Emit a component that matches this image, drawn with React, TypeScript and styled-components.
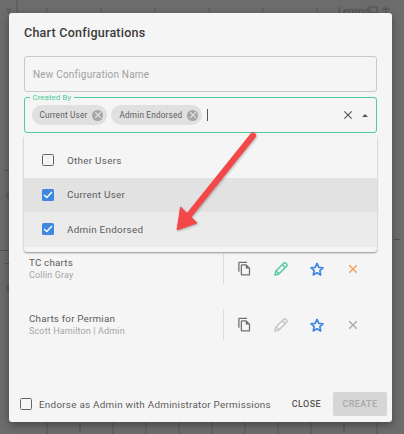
import React from "react";
import styled, { createGlobalStyle } from "styled-components";

const COPY_PATH =
  "M16 1H4c-1.1 0-2 .9-2 2v14h2V3h12V1zm-1 4H8c-1.1 0-1.99.9-1.99 2L6 21c0 1.1.89 2 1.99 2H19c1.1 0 2-.9 2-2V11l-6-6zM8 21V7h6v5h5v9H8z";
const CLOSE_PATH =
  "M19 6.41L17.59 5 12 10.59 6.41 5 5 6.41 10.59 12 5 17.59 6.41 19 12 13.41 17.59 19 19 17.59 13.41 12z";

const Icon = ({ d, size, color }: { d: string; size: number; color: string }) => (
  <svg width={size} height={size} viewBox="0 0 24 24" fill={color}>
    <path d={d} />
  </svg>
);

const PencilIcon = ({ color }: { color: string }) => (
  <svg width={18} height={18} viewBox="0 0 24 24" fill="none" stroke={color} strokeWidth={1.9} strokeLinejoin="round">
    <path d="M4 20l1.2-5.2L15.6 4.4a2 2 0 0 1 2.8 0l1.2 1.2a2 2 0 0 1 0 2.8L9.2 18.8z" />
    <path d="M13.8 6.2l4 4M5.6 14.6l3.8 3.8" />
  </svg>
);

const StarIcon = ({ color }: { color: string }) => (
  <svg width={16} height={16} viewBox="0 0 24 24" fill="none" stroke={color} strokeWidth={2.5} strokeLinejoin="round">
    <path d="M12 3.6l2.7 6 6.3.7-4.7 4.3 1.3 6.3-5.6-3.2-5.6 3.2 1.3-6.3L3 10.300l6.300-.7z" />
  </svg>
);

const CrossIcon = ({ color }: { color: string }) => (
  <svg width={14} height={14} viewBox="0 0 24 24" fill="none" stroke={color} strokeWidth={2.4}>
    <path d="M5.500 5.500l13 13M18.500 5.500l-13 13" />
  </svg>
);

const App = () => {
  return (
    <Backdrop>
      <GlobalStyle />
      <ChartBehind viewBox="0 0 404 434">
        <path d="M17 0V13M47 422V434M80 422V434M113 422V434M146 422V434M179 422V434M212 422V434M245 422V434M278 422V434M311 422V434M344 422V434M377 422V434" stroke="#565656" />
        <path d="M47 8V13M101 8V13M155 8V13M209 8V13M263 8V13M317 8V13" stroke="#5a5a5a" />
        <path d="M0 250.5H9M5 170.5H9M5 263.5H9M394 239.5H400" stroke="#505050" />
        <path d="M6 9.500H11M7 11.500H10M8 13H9M7 193H9V198H7zM7 286H9V291H7z" stroke="#525252" fill="none" />
        <path d="M370 7H377V13H370zM386 6V13M382 9H390" stroke="#4e4e4e" fill="none" />
      </ChartBehind>
      <BackdropLegend>Legend</BackdropLegend>
      <Modal>
        <Title>Chart Configurations</Title>
        <NameInput>New Configuration Name</NameInput>
        <SelectBox>
          <SelectLabel>Created By</SelectLabel>
          <Chip>
            Current User
            <ChipClear />
          </Chip>
          <Chip>
            Admin Endorsed
            <ChipClear />
          </Chip>
          <Caret />
          <SelectActions>
            <Icon d={CLOSE_PATH} size={14} color="#555" />
            <UpArrow />
          </SelectActions>
        </SelectBox>
        <ConfigList>
          <ConfigRow>
            <ConfigText>
              <ConfigName>TC charts</ConfigName>
              <ConfigOwner>Collin Gray</ConfigOwner>
            </ConfigText>
            <ConfigActions>
              <IconSlot><Icon d={COPY_PATH} size={15} color="#6e6e6e" /></IconSlot>
              <IconSlot><PencilIcon color="#4fcb9d" /></IconSlot>
              <IconSlot><StarIcon color="#3f87e0" /></IconSlot>
              <IconSlot><CrossIcon color="#f2a25c" /></IconSlot>
            </ConfigActions>
          </ConfigRow>
          <ConfigRow>
            <ConfigText>
              <ConfigName>Charts for Permian</ConfigName>
              <ConfigOwner>Scott Hamilton | Admin</ConfigOwner>
            </ConfigText>
            <ConfigActions>
              <IconSlot><Icon d={COPY_PATH} size={15} color="#6e6e6e" /></IconSlot>
              <IconSlot><PencilIcon color="#c4c4c4" /></IconSlot>
              <IconSlot><StarIcon color="#3f87e0" /></IconSlot>
              <IconSlot><CrossIcon color="#aaaaaa" /></IconSlot>
            </ConfigActions>
          </ConfigRow>
        </ConfigList>
        <Dropdown>
          <Option>
            <Box />
            Other Users
          </Option>
          <Option $tone="#e2e2e2">
            <Box $checked>
              <Tick />
            </Box>
            Current User
          </Option>
          <Option $tone="#ebebeb">
            <Box $checked>
              <Tick />
            </Box>
            Admin Endorsed
          </Option>
        </Dropdown>
        <Footer>
          <Endorse>
            <Box />
            Endorse as Admin with Administrator Permissions
          </Endorse>
          <CloseButton>CLOSE</CloseButton>
          <CreateButton>CREATE</CreateButton>
        </Footer>
        <Arrow viewBox="0 0 90 105">
          <path d="M79 3.500 L12 87" stroke="#f44848" strokeWidth="6" strokeLinecap="round" />
          <path d="M3 98 L6.500 75 L23 91 Z" fill="#f44848" stroke="#f44848" strokeLinejoin="round" />
        </Arrow>
      </Modal>
    </Backdrop>
  );
};

const Tick = () => (
  <svg width="10" height="8" viewBox="0 0 10 8">
    <path d="M1 4 L3.8 6.6 L9 1" fill="none" stroke="#fff" strokeWidth="1.4" />
  </svg>
);

const ChipClear = () => (
  <ClearDot>
    <svg width="8" height="8" viewBox="0 0 8 8">
      <path d="M1.2 1.2 L6.8 6.8 M6.8 1.2 L1.2 6.8" stroke="#e4e4e4" strokeWidth="1.2" />
    </svg>
  </ClearDot>
);

const GlobalStyle = createGlobalStyle`
  html, body {
    margin: 0;
    height: 100%;
    overflow: hidden;
    background: #6c6c6c;
    font-family: Roboto, "Liberation Sans", sans-serif;
  }
`;

const Backdrop = styled.div`
  position: relative;
  width: 404px;
  height: 434px;
  box-sizing: border-box;
  padding: 13px 12px 12px 9px;
  background-color: #6c6c6c;
  overflow: hidden;
`;

const ChartBehind = styled.svg`
  position: absolute;
  inset: 0;
  width: 404px;
  height: 434px;
`;

const BackdropLegend = styled.div`
  position: absolute;
  top: 5px;
  left: 338px;
  font-size: 9.5px;
  color: #4c4c4c;
`;

const Modal = styled.div`
  position: relative;
  height: 409px;
  box-sizing: border-box;
  padding: 10px 15px 6px 15px;
  display: flex;
  flex-direction: column;
  background: #f5f5f5;
  border-radius: 3px;
  box-shadow: 0 3px 8px rgba(0, 0, 0, 0.35);
`;

const Title = styled.h2`
  margin: 0 0 13px;
  font-size: 12.5px;
  line-height: 20px;
  font-weight: 500;
  letter-spacing: 0.25px;
  color: #3a3a3a;
`;

const NameInput = styled.div`
  height: 36px;
  box-sizing: border-box;
  margin-bottom: 5px;
  padding: 0 8px;
  display: flex;
  align-items: center;
  border: 1px solid #c9c9c9;
  border-radius: 3px;
  font-size: 10px;
  letter-spacing: 0.2px;
  color: #a0a0a0;
`;

const SelectBox = styled.div`
  position: relative;
  height: 36px;
  box-sizing: border-box;
  padding: 0 6.5px;
  display: flex;
  align-items: center;
  gap: 4px;
  border: 1.5px solid #4fcb9d;
  border-radius: 3px;
`;

const SelectLabel = styled.span`
  position: absolute;
  top: -6.5px;
  left: 4.5px;
  padding: 0 3px;
  font-size: 8px;
  line-height: 11px;
  color: #4fcb9d;
  background: #f5f5f5;
`;

const Chip = styled.span`
  height: 20px;
  padding: 0 4px 0 8px;
  display: inline-flex;
  align-items: center;
  gap: 5px;
  border-radius: 10px;
  background: #e0e0e0;
  font-size: 8.2px;
  letter-spacing: 0.2px;
  color: #5c5c5c;
`;

const ClearDot = styled.span`
  width: 11px;
  height: 11px;
  display: inline-flex;
  align-items: center;
  justify-content: center;
  border-radius: 50%;
  background: #a6a6a6;
`;

const Caret = styled.span`
  width: 1px;
  height: 12px;
  margin-left: 1px;
  background: #555;
`;

const SelectActions = styled.div`
  margin-left: auto;
  margin-right: 2px;
  display: flex;
  align-items: center;
  gap: 7px;
`;

const UpArrow = styled.span`
  width: 0;
  height: 0;
  border-left: 3px solid transparent;
  border-right: 3px solid transparent;
  border-bottom: 3px solid #555;
`;

const Dropdown = styled.div`
  position: absolute;
  top: 123px;
  left: 15px;
  right: 15px;
  height: 116px;
  box-sizing: border-box;
  padding-top: 7px;
  background: #f5f5f5;
  border-radius: 0 0 3px 3px;
  box-shadow: 0 1px 2px rgba(0, 0, 0, 0.4);
`;

const Option = styled.div<{ $tone?: string }>`
  height: 34.5px;
  padding-left: 18px;
  display: flex;
  align-items: center;
  gap: 13px;
  font-size: 9.9px;
  letter-spacing: 0.27px;
  color: #5c5c5c;
  background: ${({ $tone }) => $tone ?? "transparent"};
`;

const Box = styled.span<{ $checked?: boolean }>`
  width: 12px;
  height: 12px;
  flex: none;
  box-sizing: border-box;
  display: inline-flex;
  align-items: center;
  justify-content: center;
  border-radius: 1.5px;
  border: ${({ $checked }) => ($checked ? "none" : "1.5px solid #666")};
  background: ${({ $checked }) => ($checked ? "#3f87e0" : "transparent")};
`;

const ConfigList = styled.div`
  margin-top: 120px;
  display: flex;
  flex-direction: column;
  gap: 25px;
`;

const ConfigRow = styled.div`
  height: 31px;
  display: flex;
  align-items: center;
`;

const ConfigText = styled.div`
  width: 199px;
  padding-left: 5px;
  box-sizing: border-box;
`;

const ConfigName = styled.div`
  font-size: 9.8px;
  line-height: 13px;
  letter-spacing: 0.2px;
  color: #5c5c5c;
`;

const ConfigOwner = styled.div`
  font-size: 9px;
  line-height: 13px;
  letter-spacing: 0.15px;
  color: #a6a6a6;
`;

const ConfigActions = styled.div`
  height: 31px;
  padding-left: 2.5px;
  display: grid;
  grid-template-columns: repeat(4, 36px);
  border-left: 1.5px solid #dcdcdc;
`;

const IconSlot = styled.span`
  display: flex;
  align-items: center;
  justify-content: center;
`;

const Footer = styled.div`
  margin: auto -10px 0 -4px;
  height: 24px;
  display: flex;
  align-items: center;
`;

const Endorse = styled.label`
  flex: 1;
  display: flex;
  align-items: center;
  gap: 7px;
  font-size: 9.9px;
  letter-spacing: 0.25px;
  color: #5c5c5c;
`;

const CloseButton = styled.span`
  margin-right: 12px;
  font-size: 9px;
  font-weight: 500;
  letter-spacing: 0.4px;
  color: #555;
`;

const CreateButton = styled.span`
  width: 54px;
  height: 24px;
  display: flex;
  align-items: center;
  justify-content: center;
  border-radius: 2px;
  background: #d6d6d6;
  font-size: 9px;
  font-weight: 500;
  letter-spacing: 0.4px;
  color: #a8a8a8;
`;

const Arrow = styled.svg`
  position: absolute;
  top: 119px;
  left: 165px;
  width: 90px;
  height: 105px;
  filter: drop-shadow(1px 1px 1px rgba(0, 0, 0, 0.25));
`;

export default App;
